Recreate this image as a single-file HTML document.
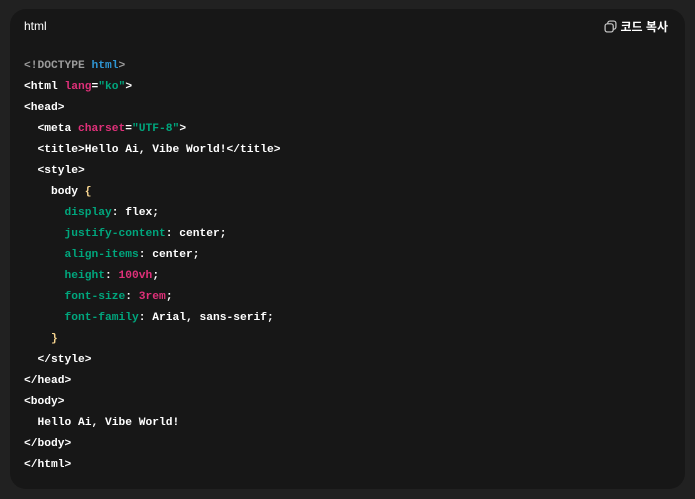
<!DOCTYPE html>
<html><head><style>
body{margin:0;background:#212121;width:695px;height:499px;overflow:hidden}
.card{position:absolute;left:10px;top:9px;width:675px;height:480px;background:#171717;border-radius:16px}
.hd{position:absolute;left:14px;top:10px;font:12px "Liberation Sans",sans-serif;color:#fff}
.cp{position:absolute;right:17px;top:9px;font:bold 12px "Liberation Sans","Noto Sans CJK KR",sans-serif;color:#fff;display:flex;align-items:center;gap:4px}
pre{position:absolute;left:14px;top:47px;margin:0;font:bold 11.25px/21px "Liberation Mono",monospace;color:#fff}
.g{color:#9b9b9b}.b{color:#2e95d3}.r{color:#df3079}.s{color:#00a67d}.y{color:#f7d58f}
</style></head><body><div class="card">
<div class="hd">html</div>
<div class="cp"><svg width="13" height="13" viewBox="0 0 12 12" fill="none" stroke="#ccc" stroke-width="1.1"><rect x="3.5" y="1" width="7.5" height="7.5" rx="2"/><rect x="1" y="3.5" width="7.5" height="7.5" rx="2" fill="#171717"/></svg>코드 복사</div>
<pre><span class="g">&lt;!DOCTYPE <span class="b">html</span>&gt;</span>
&lt;html <span class="r">lang</span>=<span class="s">"ko"</span>&gt;
&lt;head&gt;
  &lt;meta <span class="r">charset</span>=<span class="s">"UTF-8"</span>&gt;
  &lt;title&gt;Hello Ai, Vibe World!&lt;/title&gt;
  &lt;style&gt;
    body <span class="y">{</span>
      <span class="s">display</span>: flex;
      <span class="s">justify-content</span>: center;
      <span class="s">align-items</span>: center;
      <span class="s">height</span>: <span class="r">100vh</span>;
      <span class="s">font-size</span>: <span class="r">3rem</span>;
      <span class="s">font-family</span>: Arial, sans-serif;
    <span class="y">}</span>
  &lt;/style&gt;
&lt;/head&gt;
&lt;body&gt;
  Hello Ai, Vibe World!
&lt;/body&gt;
&lt;/html&gt;</pre>
</div></body></html>
